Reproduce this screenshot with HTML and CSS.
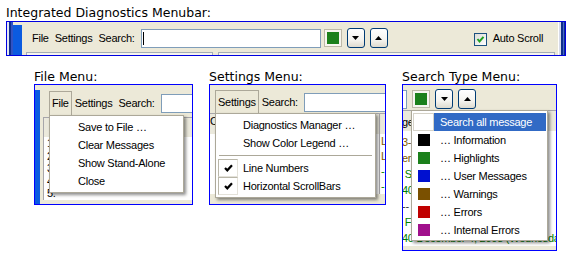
FILE: index.html
```html
<!DOCTYPE html>
<html lang="en">
<head>
    <meta charset="UTF-8">
    <title>Integrated Diagnostics Menubar</title>
    <link rel="stylesheet" href="styles.css">
</head>
<body>
    <div class="caption title">Integrated Diagnostics Menubar:</div>

    <div class="frame main-frame">
        <div class="grip"><span class="grip-bar"></span></div>
        <div class="bar-body">
            <div class="toolbar">
                <span class="menu-item">File</span>
                <span class="menu-item">Settings</span>
                <span class="menu-item">Search:</span>
                <div class="search-box"><span class="caret"></span></div>
                <span class="color-btn"><span class="swatch green"></span></span>
                <span class="arrow-btn"><svg width="7" height="4" viewBox="0 0 7 4"><polygon points="0,0 7,0 3.5,4"/></svg></span>
                <span class="arrow-btn"><svg width="7" height="4" viewBox="0 0 7 4"><polygon points="0,4 7,4 3.5,0"/></svg></span>
                <span class="auto-scroll">
                    <span class="checkbox"><svg width="11" height="11" viewBox="0 0 11 11"><path d="M2.5 5 L4.5 7.5 L8.5 2.8" fill="none" stroke="#21a121" stroke-width="2"/></svg></span>
                    Auto Scroll
                </span>
            </div>
            <div class="panels">
                <div class="panel-top narrow"></div>
                <div class="panel-top wide"></div>
            </div>
        </div>
        <div class="edge"></div>
    </div>

    <div class="shots">
        <div class="shot">
            <div class="caption">File Menu:</div>
            <div class="frame shot-file">
                <span class="stripe"></span>
                <div class="shot-body">
                    <div class="toolbar open-row">
                        <span class="menu-item open">File</span>
                        <span class="menu-item">Settings</span>
                        <span class="menu-item">Search:</span>
                        <div class="search-box"></div>
                    </div>
                    <div class="pane bordered">
                        <div class="pane-head"></div>
                        <div class="pane-lines numbers">
                            <div>1.</div>
                            <div>2.</div>
                            <div>3.</div>
                            <div>4.</div>
                            <div>5.</div>
                        </div>
                    </div>
                </div>
                <div class="menu menu-file">
                    <div class="menu-row">Save to File …</div>
                    <div class="menu-row">Clear Messages</div>
                    <div class="menu-row">Show Stand-Alone</div>
                    <div class="menu-row">Close</div>
                </div>
            </div>
        </div>

        <div class="shot">
            <div class="caption">Settings Menu:</div>
            <div class="frame shot-settings">
                <div class="toolbar open-row">
                    <span class="menu-item open">Settings</span>
                    <span class="menu-item">Search:</span>
                    <div class="search-box"></div>
                </div>
                <div class="pane split">
                    <div class="pane-col first">
                        <div class="pane-head">C</div>
                    </div>
                    <div class="pane-col">
                        <div class="pane-head"></div>
                        <div class="pane-lines">
                            <div class="warn">L</div>
                            <div class="warn">L</div>
                            <div class="hi">-</div>
                            <div class="hi">-</div>
                        </div>
                    </div>
                </div>
                <div class="menu menu-settings">
                    <div class="menu-row">Diagnostics Manager …</div>
                    <div class="menu-row">Show Color Legend …</div>
                    <div class="menu-sep"></div>
                    <div class="menu-row checked">
                        <span class="check-box"><svg width="9" height="8" viewBox="0 0 9 8"><path d="M1 4 L3.3 6.3 L8 1.2" fill="none" stroke="#000" stroke-width="2.2"/></svg></span>
                        Line Numbers
                    </div>
                    <div class="menu-row checked">
                        <span class="check-box"><svg width="9" height="8" viewBox="0 0 9 8"><path d="M1 4 L3.3 6.3 L8 1.2" fill="none" stroke="#000" stroke-width="2.2"/></svg></span>
                        Horizontal ScrollBars
                    </div>
                </div>
            </div>
        </div>

        <div class="shot">
            <div class="caption">Search Type Menu:</div>
            <div class="frame shot-search">
                <div class="toolbar">
                    <div class="search-box cut"></div>
                    <span class="color-btn"><span class="swatch green"></span></span>
                    <span class="arrow-btn"><svg width="7" height="4" viewBox="0 0 7 4"><polygon points="0,0 7,0 3.5,4"/></svg></span>
                    <span class="arrow-btn"><svg width="7" height="4" viewBox="0 0 7 4"><polygon points="0,4 7,4 3.5,0"/></svg></span>
                </div>
                <div class="pane">
                    <div class="pane-head">ge</div>
                    <div class="pane-lines log">
                        <div class="warn">3-</div>
                        <div class="warn">er'</div>
                        <div class="hi">&nbsp;S</div>
                        <div class="hi">40</div>
                        <div class="plain">--</div>
                        <div class="hi">&nbsp;F</div>
                        <div class="hi">40 December 4, 2008 (Wednesday)</div>
                    </div>
                </div>
                <div class="menu menu-search">
                    <div class="type-row active"><span class="type-ico blank"></span><span class="type-label">Search all message</span></div>
                    <div class="type-row"><span class="type-ico"><span class="swatch black"></span></span><span class="type-label">… Information</span></div>
                    <div class="type-row"><span class="type-ico"><span class="swatch green"></span></span><span class="type-label">… Highlights</span></div>
                    <div class="type-row"><span class="type-ico"><span class="swatch blue"></span></span><span class="type-label">… User Messages</span></div>
                    <div class="type-row"><span class="type-ico"><span class="swatch brown"></span></span><span class="type-label">… Warnings</span></div>
                    <div class="type-row"><span class="type-ico"><span class="swatch red"></span></span><span class="type-label">… Errors</span></div>
                    <div class="type-row"><span class="type-ico"><span class="swatch purple"></span></span><span class="type-label">… Internal Errors</span></div>
                </div>
            </div>
        </div>
    </div>
</body>
</html>
```

FILE: styles.css
```css
body {
    margin: 0;
    background: #fff;
    color: #000;
    font-family: "Liberation Sans", Arial, sans-serif;
    font-size: 11px;
    letter-spacing: -0.25px;
}

.caption {
    font-family: "DejaVu Sans", Verdana, sans-serif;
    font-size: 12.5px;
    line-height: 15px;
    letter-spacing: 0;
    white-space: nowrap;
}

.title {
    margin: 5px 0 1px 6px;
}

.frame {
    box-sizing: border-box;
    position: relative;
    border: 1px solid #0000ff;
    background: #ece9d8;
    overflow: hidden;
}

/* main menubar */

.main-frame {
    display: flex;
    width: 560px;
    height: 35px;
    margin-left: 6px;
    border-color: #0000e0;
}

.grip {
    display: flex;
    width: 15px;
    flex-shrink: 0;
    background: linear-gradient(to right, #e2e6f4 0 2px, #0f2f8c 2px 4px, #3153c4 4px 6px, transparent 6px);
}

.grip-bar {
    width: 9px;
    margin: 3px 0 0 6px;
    background: #0b5be0;
}

.edge {
    width: 7px;
    flex-shrink: 0;
    background: linear-gradient(to right, #fff 0 1px, #d6dae8 1px 3px, #0f2f8c 3px 5px, #4a68c8 5px 6px, #0f2f8c 6px 7px);
}

.bar-body {
    flex: 1;
    min-width: 0;
}

.toolbar {
    display: flex;
    align-items: center;
    height: 20px;
    white-space: nowrap;
}

.toolbar > * {
    flex-shrink: 0;
}

.main-frame .toolbar {
    margin-top: 6px;
    padding-left: 7px;
}

.menu-item {
    padding: 0 3px;
    line-height: 20px;
}

.menu-item.open {
    box-sizing: border-box;
    height: 24px;
    padding: 0 2px;
    line-height: 22px;
    border: 1px solid #aca899;
    border-bottom: 0;
}

.open-row {
    height: 24px;
}

.search-box {
    box-sizing: border-box;
    display: flex;
    align-items: center;
    width: 180px;
    height: 19px;
    margin-left: 3px;
    border: 1px solid #7f9db9;
    background: #fff;
}

.search-box.cut {
    width: 4px;
    margin-left: 0;
    border-left: 0;
}

.caret {
    width: 1px;
    height: 13px;
    margin-left: 1px;
    background: #000;
}

.color-btn {
    box-sizing: border-box;
    width: 18px;
    height: 18px;
    margin-left: 3px;
    padding: 2px;
    border: 1px solid #bdb9a8;
    background: #f7f6f0;
}

.swatch {
    display: block;
    width: 12px;
    height: 12px;
}

.swatch.green { background: #1b801b; }
.swatch.black { background: #000; }
.swatch.blue { background: #0010d0; }
.swatch.brown { background: #7a5000; }
.swatch.red { background: #c00000; }
.swatch.purple { background: #a0108c; }

.arrow-btn {
    box-sizing: border-box;
    display: flex;
    align-items: center;
    justify-content: center;
    width: 18px;
    height: 20px;
    margin-left: 5px;
    border: 1px solid #003c74;
    border-radius: 3px;
    background: linear-gradient(#fff 0%, #f5f4ef 60%, #dedbcf 100%);
}

.arrow-btn svg {
    fill: #000;
}

.auto-scroll {
    display: flex;
    align-items: center;
    margin-left: 86px;
}

.checkbox {
    box-sizing: border-box;
    display: flex;
    width: 13px;
    height: 13px;
    margin: 2px 6px 0 0;
    border: 1px solid #1c5180;
    background: linear-gradient(135deg, #dcdcd7, #fff);
}

.panels {
    display: flex;
    margin-top: 4px;
}

.panel-top {
    box-sizing: border-box;
    height: 10px;
    border: 1px solid #a5acb5;
    border-bottom: 0;
    background: #f5f4ee;
}

.panel-top.narrow {
    width: 187px;
    margin-left: 4px;
}

.panel-top.wide {
    width: 337px;
    margin-left: 5px;
}

/* cropped views */

.shots {
    display: flex;
    align-items: flex-start;
    gap: 16px;
    margin-top: 13px;
    padding-left: 34px;
}

.shot-file {
    display: flex;
    width: 159px;
    height: 121px;
}

.shot-settings {
    width: 177px;
    height: 121px;
}

.shot-search {
    width: 155px;
    height: 167px;
}

.stripe {
    width: 5px;
    margin-top: 5px;
    flex-shrink: 0;
    background: #0b5be0;
}

.shot-body {
    flex: 1;
    min-width: 0;
}

.shot-file .toolbar {
    margin-top: 6px;
    padding-left: 9px;
}

.shot-settings .toolbar {
    margin-top: 5px;
    padding-left: 5px;
}

.shot-search .toolbar {
    margin-top: 4px;
}

.shot-search .color-btn {
    margin-left: 5px;
}

.pane {
    border-top: 1px solid #a7a6aa;
    background: #fff;
    white-space: nowrap;
}

.pane.bordered {
    margin: 2px 0 0 3px;
    border-left: 1px solid #a7a6aa;
}

.pane-head {
    height: 19px;
    background: #ebe9dc;
    line-height: 14px;
}

.pane-lines {
    line-height: 15px;
    padding-left: 1px;
}

.numbers {
    padding-left: 3px;
    line-height: 12.5px;
}

.pane.split {
    display: flex;
    margin-top: -1px;
}

.pane.split .pane-head {
    height: 20px;
}

.pane-col {
    flex: 1;
}

.pane-col.first {
    flex: none;
    width: 169px;
    border-right: 1px solid #a7a6aa;
}

.shot-search .pane {
    margin-top: 1px;
}

.shot-search .pane-head {
    height: 20px;
    line-height: 12px;
    padding-top: 0;
}

.shot-search .pane-head {
    box-sizing: border-box;
    padding: 5px 0 0 0;
    margin-left: -1px;
}

.log {
    margin-left: -1px;
    padding: 3px 0 0 0;
    line-height: 16px;
}

.warn { color: #7b5800; }
.hi { color: #008000; }
.plain { color: #333; }

/* dropdown menus */

.menu {
    box-sizing: border-box;
    position: absolute;
    padding: 2px;
    border: 1px solid #aca899;
    background: #fff;
    box-shadow: 2px 2px 3px rgba(0, 0, 0, 0.45);
    white-space: nowrap;
}

.menu-file {
    left: 14px;
    top: 30px;
    width: 135px;
}

.menu-settings {
    left: 5px;
    top: 28px;
    width: 161px;
}

.menu-search {
    left: 8px;
    top: 25px;
    width: 137px;
    padding: 2px 1px 1px;
}

.menu-row {
    height: 18px;
    line-height: 18px;
    padding-left: 26px;
}

.menu-settings .menu-row {
    padding-left: 25px;
}

.menu-settings .menu-row.checked {
    display: flex;
    align-items: center;
    padding-left: 0;
}

.check-box {
    box-sizing: border-box;
    display: flex;
    align-items: center;
    justify-content: center;
    width: 20px;
    height: 18px;
    margin-right: 5px;
    border: 1px solid;
    border-color: #b9b6a8 #e4e2da #e4e2da #b9b6a8;
}

.menu-sep {
    height: 7px;
    margin: 0 1px;
    background: linear-gradient(transparent 3px, #aca899 3px 4px, transparent 4px);
}

.type-row {
    display: flex;
    height: 18px;
    line-height: 18px;
}

.type-ico {
    box-sizing: border-box;
    display: flex;
    align-items: center;
    width: 21px;
    padding-left: 5px;
}

.type-ico.blank {
    border: 1px solid #d5d2c8;
    background: #fff;
}

.type-label {
    flex: 1;
    padding-left: 6px;
}

.type-row.active .type-label {
    background: #316ac5;
    color: #fff;
}
```
